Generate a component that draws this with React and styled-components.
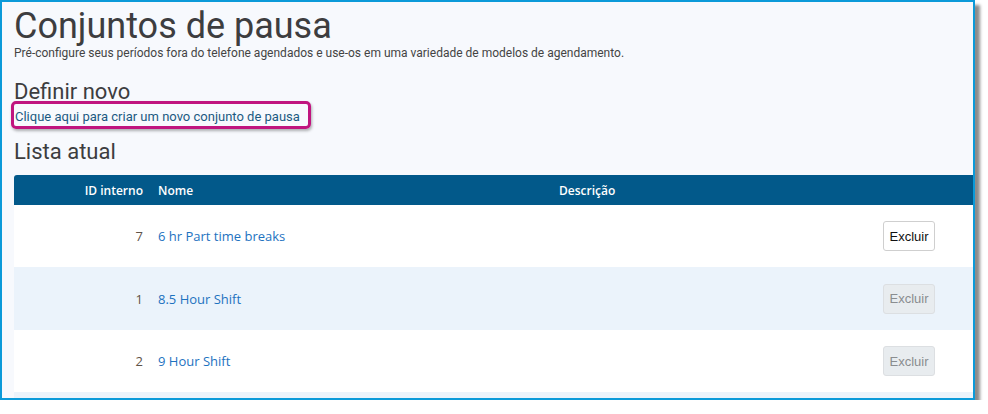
import React from "react";
import styled, { createGlobalStyle } from "styled-components";

const Global = createGlobalStyle`
  html, body { margin: 0; padding: 0; background: #ffffff; }
  body { font-family: Roboto, "Liberation Sans", sans-serif; }
  * { box-sizing: border-box; }
`;

const Frame = styled.div`
  width: 975px;
  height: 400px;
  border: 2px solid #0b9ad9;
  background: #f7f9fd;
  box-shadow: 5px 5px 3px rgba(0, 0, 0, 0.45);
  overflow: hidden;
  padding: 4px 0 0 12px;
`;

const Title = styled.h1`
  margin: 0;
  font-family: Roboto, sans-serif;
  font-weight: 400;
  font-size: 36px;
  line-height: 40px;
  color: #3d3d3f;
`;

const Subtitle = styled.p`
  margin: 0;
  font-family: Roboto, sans-serif;
  font-size: 12px;
  line-height: 14px;
  color: #444;
`;

const Section = styled.h2`
  margin: ${(p) => p.$top}px 0 0;
  font-family: Roboto, sans-serif;
  font-weight: 400;
  font-size: 22px;
  line-height: ${(p) => p.$lh}px;
  color: #3d3d3f;
`;

const Callout = styled.div`
  display: inline-block;
  margin: -3px 0 0 -3px;
  padding: 5px 8px 2px 1px;
  border: 3px solid #c0157f;
  border-radius: 5px;
  box-shadow: 1px 2px 3px rgba(0, 0, 0, 0.3);
`;

const CreateLink = styled.a`
  font-family: Roboto, sans-serif;
  font-size: 13px;
  line-height: 15px;
  display: block;
  color: #1b5a82;
  text-decoration: none;
`;

const Table = styled.div`
  margin-top: 10px;
  display: grid;
  grid-template-columns: 136px 401px 1fr auto;
  font-family: "Open Sans", sans-serif;
`;

const HeadCell = styled.div`
  background: #02598a;
  color: #ffffff;
  font-size: 12px;
  font-weight: 600;
  height: 30px;
  display: flex;
  align-items: center;
  justify-content: ${(p) => (p.$right ? "flex-end" : "flex-start")};
  padding: ${(p) => (p.$right ? "0 7px 0 0" : "0 0 0 8px")};
  &:first-child { border-top-left-radius: 3px; }
`;

const Cell = styled.div`
  background: ${(p) => (p.$alt ? "#ebf3fb" : "#ffffff")};
  height: ${(p) => p.$h}px;
  display: flex;
  align-items: center;
  font-size: 12px;
  justify-content: ${(p) => (p.$right ? "flex-end" : "flex-start")};
  padding: ${(p) => p.$pad};
`;

const IdText = styled.span`
  color: #5f5448;
  font-size: 13px;
`;

const NameLink = styled.a`
  color: #1d72bf;
  font-size: 13px;
  text-decoration: none;
`;

const DeleteButton = styled.button`
  font-family: "Liberation Sans", Arial, sans-serif;
  font-size: 13px;
  width: 52px;
  height: 30px;
  padding: 0;
  border-radius: 3px;
  border: 1px solid ${(p) => (p.disabled ? "#dcdfe2" : "#cfcfcf")};
  background: ${(p) => (p.disabled ? "#e8ecef" : "#ffffff")};
  color: ${(p) => (p.disabled ? "#8a8d90" : "#111111")};
`;

const rows = [
  { id: 7, name: "6 hr Part time breaks", enabled: true, h: 62 },
  { id: 1, name: "8.5 Hour Shift", enabled: false, h: 63 },
  { id: 2, name: "9 Hour Shift", enabled: false, h: 62 },
];

export default function App() {
  return (
    <>
      <Global />
      <Frame>
        <Title>Conjuntos de pausa</Title>
        <Subtitle>
          Pré-configure seus períodos fora do telefone agendados e use-os em uma variedade de modelos de agendamento.
        </Subtitle>
        <Section $top={20} $lh={24}>Definir novo</Section>
        <Callout>
          <CreateLink href="#">Clique aqui para criar um novo conjunto de pausa</CreateLink>
        </Callout>
        <Section $top={10} $lh={26}>Lista atual</Section>
        <Table>
          <HeadCell $right>ID interno</HeadCell>
          <HeadCell>Nome</HeadCell>
          <HeadCell>Descrição</HeadCell>
          <HeadCell />
          {rows.map((r, i) => {
            const alt = i % 2 === 1;
            return (
              <React.Fragment key={r.id}>
                <Cell $alt={alt} $h={r.h} $right $pad="0 7px 0 0">
                  <IdText>{r.id}</IdText>
                </Cell>
                <Cell $alt={alt} $h={r.h} $pad="0 0 0 8px">
                  <NameLink href="#">{r.name}</NameLink>
                </Cell>
                <Cell $alt={alt} $h={r.h} $pad="0 0 0 8px" />
                <Cell $alt={alt} $h={r.h} $right $pad="0 38px 0 0">
                  <DeleteButton disabled={!r.enabled}>Excluir</DeleteButton>
                </Cell>
              </React.Fragment>
            );
          })}
          <Cell $alt $h={20} $pad="0" />
          <Cell $alt $h={20} $pad="0" />
          <Cell $alt $h={20} $pad="0" />
          <Cell $alt $h={20} $pad="0" />
        </Table>
      </Frame>
    </>
  );
}
